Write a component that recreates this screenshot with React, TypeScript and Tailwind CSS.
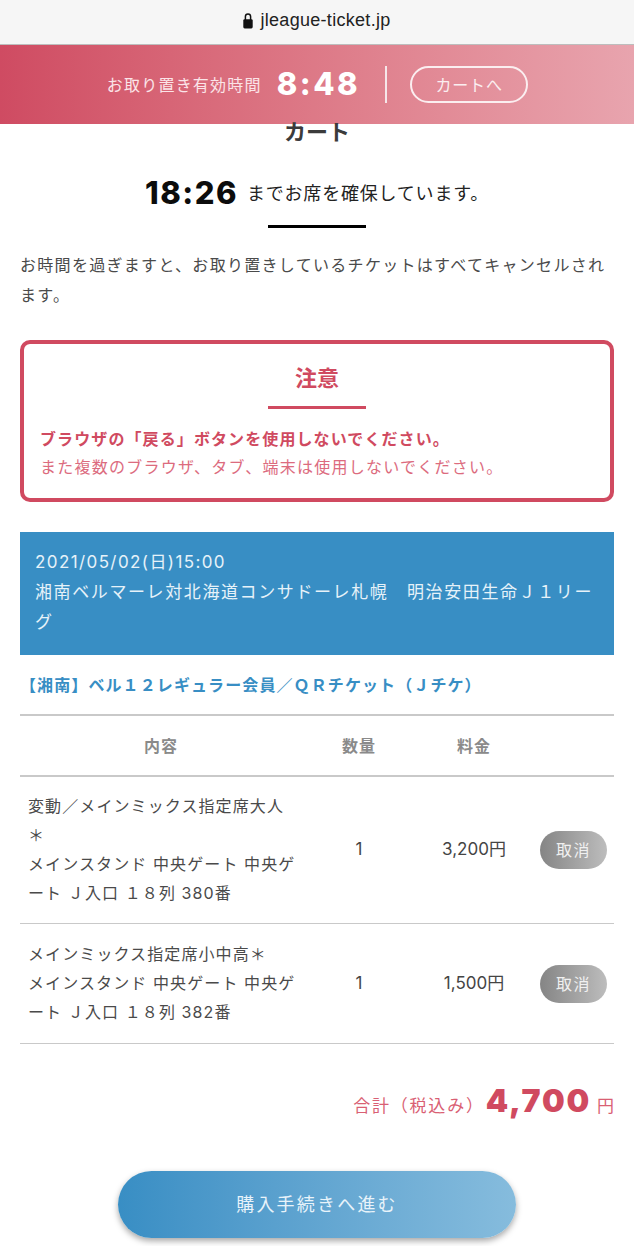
import React from "react";

const jp = "font-['Inter','Noto_Sans_CJK_JP','Noto_Sans',sans-serif]";
const num = "font-['Inter','Noto_Sans_CJK_JP',sans-serif]";

function Row({ lines, qty, price, h }: { lines: string[]; qty: string; price: string; h: string }) {
  return (
    <div className={`flex items-center border-b border-[#c9c9c9] ${h}`}>
      <div className="w-[290px] pl-[8px] text-[16px] leading-[29px] tracking-[1.1px] text-[#4a4a4a] whitespace-nowrap">
        {lines.map((l) => (
          <div key={l}>{l}</div>
        ))}
      </div>
      <div className="w-[98px] text-center text-[17px] text-[#444]">{qty}</div>
      <div className="w-[132px] text-center text-[17px] text-[#444]">{price}</div>
      <div className="flex h-[38px] w-[67px] items-center justify-center rounded-full bg-gradient-to-r from-[#858585] to-[#bdbdbd] text-[16px] tracking-[1.5px] text-[#f0f0f0]">
        取消
      </div>
    </div>
  );
}

export default function App() {
  return (
    <div className={`${jp} h-[1246px] w-[634px] overflow-hidden bg-white`}>
      <div className="flex h-[45px] items-center justify-center gap-[7px] border-b border-[#bdbdbd] bg-[#f6f6f6] pb-[3px] font-['Liberation_Sans',sans-serif] text-[18px] tracking-[0.3px] text-[#222]">
        <svg width="10" height="17" viewBox="0 0 10 17" aria-hidden="true">
          <path d="M2.4 8V4.6a2.6 2.6 0 0 1 5.2 0V8" fill="none" stroke="#111" strokeWidth="1.5" />
          <rect x="0.3" y="7.2" width="9.4" height="9.3" rx="1.4" fill="#111" />
        </svg>
        <span>jleague-ticket.jp</span>
      </div>
      <div className="flex h-[79px] items-center justify-center bg-gradient-to-r from-[#cf4b62] to-[#e8a4ae] pl-[1px] text-white">
        <span className="text-[16px] tracking-[1.2px] text-[#fbe4e8]">お取り置き有効時間</span>
        <span className={`${num} ml-[15px] text-[31px] font-extrabold tracking-[2.5px]`}>8:48</span>
        <span className="ml-[25px] h-[37px] w-[2px] bg-[#f6e6e9]" />
        <span className="ml-[23px] flex h-[37px] w-[118px] items-center justify-center rounded-full border-2 border-[#fbeef0] text-[16px] tracking-[0.8px] text-[#fbeef0]">
          カートへ
        </span>
      </div>

      <div className="px-[20px]">
        <h1 className="mt-[-5px] text-center text-[22px] leading-[26px] font-bold text-[#3b3b3b]">カート</h1>
        <div className="mt-[26px] flex items-center justify-center">
          <span className={`${num} text-[31px] leading-[44px] font-extrabold tracking-[1.5px] text-[#0c0c0c]`}>18:26</span>
          <span className="ml-[9px] text-[18px] tracking-[0.8px] text-[#222]">までお席を確保しています。</span>
        </div>
        <div className="mx-auto mt-[10px] h-[3px] w-[98px] bg-black" />
        <p className="mt-[22px] text-[16px] leading-[30px] tracking-[1.3px] whitespace-nowrap text-[#4a4a4a]">
          お時間を過ぎますと、お取り置きしているチケットはすべてキャンセルされ
          <br />
          ます。
        </p>

        <div className="mt-[30px] h-[162px] rounded-[10px] border-[4px] border-[#d04a60] px-[16px] pt-[18px]">
          <div className="text-center text-[22px] leading-[32px] font-bold text-[#d04a60]">注意</div>
          <div className="mx-auto mt-[12px] h-[3px] w-[98px] bg-[#d04a60]" />
          <div className="mt-[16px] text-[16px] leading-[28px] font-bold tracking-[1.1px] text-[#d04a60]">
            ブラウザの「戻る」ボタンを使用しないでください。
          </div>
          <div className="text-[16px] leading-[28px] tracking-[1.25px] text-[#dc6b7e]">
            また複数のブラウザ、タブ、端末は使用しないでください。
          </div>
        </div>

        <div className="mt-[30px] h-[123px] bg-[#388ec4] px-[15px] pt-[15px] text-[17px] leading-[30px] tracking-[1.6px] text-[#e6f2f9]">
          <div className="tracking-[1.4px]">2021/05/02(日)15:00</div>
          <div>湘南ベルマーレ対北海道コンサドーレ札幌　明治安田生命Ｊ１リーグ</div>
        </div>

        <div className="mt-[16px] text-[16px] leading-[28px] font-bold tracking-[1.1px] text-[#388ec4]">
          【湘南】ベル１２レギュラー会員／ＱＲチケット（Ｊチケ）
        </div>

        <div className="mt-[15px] border-t-2 border-[#c9c9c9]">
          <div className="flex h-[61px] items-center border-b-2 border-[#c9c9c9] text-[16px] font-bold tracking-[1px] text-[#8a8a8a]">
            <div className="w-[282px] text-center">内容</div>
            <div className="w-[114px] text-center">数量</div>
            <div className="w-[116px] text-center">料金</div>
          </div>
          <Row h="h-[147px]" lines={["変動／メインミックス指定席大人", "＊", "メインスタンド 中央ゲート 中央ゲ", "ート Ｊ入口 １８列 380番"]} qty="1" price="3,200円" />
          <Row h="h-[120px]" lines={["メインミックス指定席小中高＊", "メインスタンド 中央ゲート 中央ゲ", "ート Ｊ入口 １８列 382番"]} qty="1" price="1,500円" />
        </div>

        <div className="mt-[33px] flex items-baseline justify-end text-[#d95f74]">
          <span className="text-[17px] tracking-[1.8px]">合計（税込み）</span>
          <span className={`${num} ml-[1px] text-[32px] leading-[48px] font-black tracking-[1.8px] text-[#d04a60]`}>4,700</span>
          <span className="ml-[6px] text-[17px]">円</span>
        </div>

        <div className="mx-auto mt-[46px] flex h-[67px] w-[398px] items-center justify-center rounded-full bg-gradient-to-r from-[#388ec4] to-[#86bcdd] text-[18px] tracking-[2.2px] text-[#e8f3fa] shadow-[0_3px_6px_rgba(0,0,0,0.35)]">
          購入手続きへ進む
        </div>
      </div>
    </div>
  );
}
